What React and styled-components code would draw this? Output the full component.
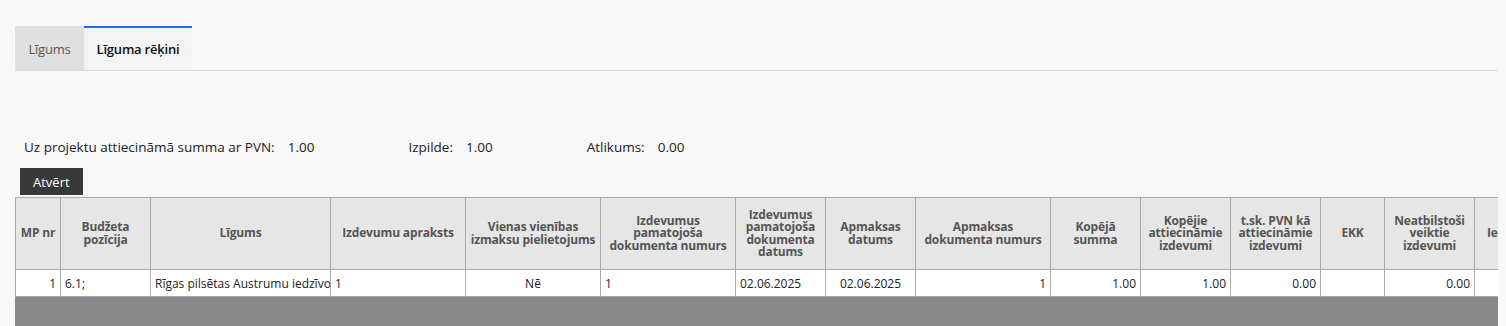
import React from 'react';
import styled, { createGlobalStyle } from 'styled-components';

const Global = createGlobalStyle`
body {
  margin: 8px;
  background: #f8f8f8;
  font-family: "Open Sans", "Noto Sans", sans-serif;
  color: #222;
}
`

const Page = styled.div`
padding: 18px 0 0 7px;
`
const TabBar = styled.div`
display: flex;
border-bottom: 1px solid #dcdcdc;
margin-right: -8px;
`
const Tab = styled.div`
height: 44px;
width: ${p => p.w}px;
display: flex;
align-items: center;
justify-content: center;
font-size: 13px;
letter-spacing: -0.2px;
box-sizing: border-box;
background: ${p => p.active ? '#f3f3f3' : '#e0e0e0'};
color: ${p => p.active ? '#111' : '#555'};
font-weight: ${p => p.active ? 600 : 400};
border-top: 2px solid ${p => p.active ? '#1a6ee8' : '#e0e0e0'};
`
const Summary = styled.div`
display: flex;
gap: 94px;
margin: 66px 0 0 9px;
font-size: 13.5px;
color: #222;
height: 20px;
align-items: center;
`
const Item = styled.div`
display: flex;
gap: 13px;
`
const Button = styled.button`
display: block;
margin: 11px 0 2px 5px;
height: 27px;
padding: 0 13px;
border: none;
background: #383838;
color: #fff;
font-family: inherit;
font-size: 13px;
`
const Wrap = styled.div`
width: 1483px;
height: 129px;
overflow: hidden;
background: #888;
`
const Table = styled.table`
border-collapse: collapse;
table-layout: fixed;
width: 1594px;
font-size: 12px;
`
const Th = styled.th`
background: #e6e6e6;
border: 1px solid #aaa;
height: 71px;
padding: ${p => p.align === 'left' ? '0 0 0 12px' : '0 2px'};
color: #555;
font-weight: 700;
line-height: 12.5px;
letter-spacing: -0.15px;
text-align: ${p => p.align || 'center'};
vertical-align: middle;
white-space: ${p => p.align === 'left' ? 'nowrap' : 'normal'};
`
const Td = styled.td`
background: #fff;
border: 1px solid #aaa;
height: 26px;
padding: 0 4px;
color: #222;
white-space: nowrap;
overflow: hidden;
text-align: ${p => p.align || 'left'};
`

const cols = [
  { w: 45, h: 'MP nr', v: '1', a: 'right' },
  { w: 90, h: 'Budžeta pozīcija', v: '6.1;' },
  { w: 180, h: 'Līgums', v: 'Rīgas pilsētas Austrumu iedzīvo' },
  { w: 135, h: 'Izdevumu apraksts', v: '1' },
  { w: 135, h: 'Vienas vienības izmaksu pielietojums', v: 'Nē', a: 'center' },
  { w: 135, h: 'Izdevumus pamatojoša dokumenta numurs', v: '1' },
  { w: 90, h: 'Izdevumus pamatojoša dokumenta datums', v: '02.06.2025' },
  { w: 90, h: 'Apmaksas datums', v: '02.06.2025', a: 'center' },
  { w: 135, h: 'Apmaksas dokumenta numurs', v: '1', a: 'right' },
  { w: 90, h: 'Kopējā summa', v: '1.00', a: 'right' },
  { w: 90, h: 'Kopējie attiecināmie izdevumi', v: '1.00', a: 'right' },
  { w: 90, h: 't.sk. PVN kā attiecināmie izdevumi', v: '0.00', a: 'right' },
  { w: 64, h: 'EKK', v: '' },
  { w: 90, h: 'Neatbilstoši veiktie izdevumi', v: '0.00', a: 'right' },
  { w: 135, h: 'Ie', v: '', ha: 'left' },
]

export default function App() {
  return (
    <Page>
      <Global />
      <TabBar>
        <Tab w={69}>Līgums</Tab>
        <Tab w={108} active>Līguma rēķini</Tab>
      </TabBar>
      <Summary>
        <Item><span>Uz projektu attiecināmā summa ar PVN:</span><span>1.00</span></Item>
        <Item><span>Izpilde:</span><span>1.00</span></Item>
        <Item><span>Atlikums:</span><span>0.00</span></Item>
      </Summary>
      <Button>Atvērt</Button>
      <Wrap>
        <Table>
          <colgroup>
            {cols.map((c, i) => <col key={i} style={{ width: c.w }} />)}
          </colgroup>
          <thead>
            <tr>{cols.map((c, i) => <Th key={i} align={c.ha}>{c.h}</Th>)}</tr>
          </thead>
          <tbody>
            <tr>{cols.map((c, i) => <Td key={i} align={c.a}>{c.v}</Td>)}</tr>
          </tbody>
        </Table>
      </Wrap>
    </Page>
  )
}
